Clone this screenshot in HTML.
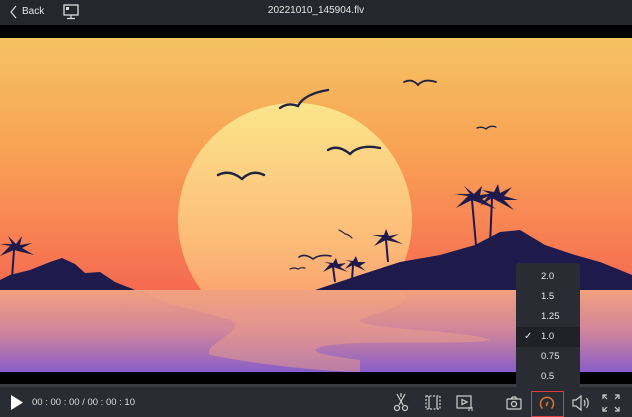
<!DOCTYPE html>
<html><head><meta charset="utf-8"><style>
body{margin:0;width:632px;height:417px;background:#000;overflow:hidden;font-family:"Liberation Sans",sans-serif;position:relative}
.top{position:absolute;left:0;top:0;width:632px;height:25px;background:#25272e;color:#e6e6e6;font-size:10px}
.bot{position:absolute;left:0;top:387px;width:632px;height:30px;background:#2a2c33}
.menu{position:absolute;left:516px;top:263px;width:64px;height:124px;background:#2a2c33;border-radius:3px;color:#e8e8e8;font-size:9.5px}
.menu div{height:20px;line-height:20px;padding-left:25px;position:relative}
.menu .sel{background:#202126}
</style></head><body>
<div class="top">
<svg style="position:absolute;left:9px;top:5px" width="10" height="14"><path d="M7 1 L2 7 L7 13" stroke="#ddd" stroke-width="1.2" fill="none"/></svg>
<span style="position:absolute;left:22px;top:6px">Back</span>
<svg style="position:absolute;left:63px;top:4px" width="17" height="16"><rect x="1" y="1" width="14" height="10" stroke="#ddd" stroke-width="1.3" fill="none"/><rect x="3" y="3" width="3" height="3" fill="#ddd"/><path d="M8 11v3M4 14.5h8" stroke="#ddd" stroke-width="1.2"/></svg>
<span style="position:absolute;left:0;width:632px;text-align:center;top:5px">20221010_145904.flv</span>
</div>
<svg style="position:absolute;left:0;top:38px" width="632" height="334" viewBox="0 38 632 334">
<defs>
<linearGradient id="sky" x1="0" y1="0" x2="0" y2="1"><stop offset="0" stop-color="#f4c261"/><stop offset="0.45" stop-color="#f9a255"/><stop offset="1" stop-color="#f66a52"/></linearGradient>
<linearGradient id="sun" x1="0" y1="0" x2="0" y2="1"><stop offset="0" stop-color="#fbe58b"/><stop offset="0.6" stop-color="#fcbb78"/><stop offset="1" stop-color="#fb9068"/></linearGradient>
<linearGradient id="sea" x1="0" y1="0" x2="0" y2="1"><stop offset="0" stop-color="#f2a07c"/><stop offset="0.5" stop-color="#d0859c"/><stop offset="1" stop-color="#8a5ec8"/></linearGradient>
</defs>
<rect x="0" y="38" width="632" height="252" fill="url(#sky)"/>
<circle cx="295" cy="220" r="117" fill="url(#sun)"/>
<rect x="0" y="290" width="632" height="82" fill="url(#sea)"/>
<path d="M150 290 C140 300 200 310 230 320 C250 330 200 345 210 355 C260 365 330 372 360 372 L360 360 C320 355 300 350 330 345 C380 340 470 345 490 340 C470 330 360 330 360 320 C380 310 420 305 400 290Z" fill="#f5a582" opacity="0.45"/>
<path d="M0 290 L0 280 L10 275 L30 270 L50 262 L62 258 L75 264 L85 273 L100 272 L115 282 L135 290Z" fill="#1f1a4c"/>
<path d="M315 290 L360 275 L400 262 L440 255 L475 245 L500 232 L520 230 L545 245 L575 255 L600 262 L620 270 L632 275 L632 290Z" fill="#1f1a4c"/>
<g stroke="#1f1a4c" stroke-width="2" fill="none">
<path d="M12 278 L14 250 M476 245 L472 200 M490 245 L492 198 M388 262 L386 240 M335 282 L333 267 M352 280 L353 265"/>
</g>
<g fill="#1f1a4c">
<path d="M14 250 l-14 6 l10-10 l-10-2 l12 0 l-4-8 l8 8 l6-8 l-2 9 l12-2 l-10 5 l12 7z"/>
<path d="M472 200 l-16 8 l12-12 l-14-2 l16 0 l-6-8 l10 8 l8-8 l-2 9 l16-2 l-14 6 l14 10z"/>
<path d="M492 198 l-12 8 l10-12 l-8-4 l12 2 l4-8 l2 9 l12-6 l-8 9 l14 4 l-14 0 l10 10z"/>
<path d="M386 240 l-12 6 l8-9 l-10-2 l12 0 l2-6 l3 7 l10-2 l-8 4 l12 6z"/>
<path d="M333 267 l-10 5 l7-8 l-6-2 l9 1 l3-5 l2 6 l8-1 l-6 4 l8 5z"/>
<path d="M353 265 l-8 4 l6-7 l-6-2 l8 1 l3-5 l2 6 l8 0 l-6 4 l6 5z"/>
</g>
<g stroke="#1e2340" stroke-width="2.4" fill="none" stroke-linecap="round">
<path d="M280 108 q8-6 18-2 q6-12 30-16"/>
<path d="M218 175 q12-6 24 4 q10-10 22-4"/>
<path d="M328 150 q10-6 22 4 q10-10 30-6"/>
<path d="M404 82 q8-4 14 3 q6-7 18-3" stroke-width="1.8"/>
<path d="M477 128 q5-2 9 1 q4-4 10-2" stroke-width="1.3"/>
<path d="M299 257 q6-4 14 2 q6-5 18-3" stroke-width="1.6"/>
<path d="M290 269 q4-2 8 0 q3-2 7-1" stroke-width="1.2"/>
<path d="M339 230 q4 2 6 4 q3 0 7 4" stroke-width="1.2"/>
</g>
</svg>
<div style="position:absolute;left:0;top:384px;width:632px;height:3px;background:#3a3c44"></div>
<div class="bot">
<svg style="position:absolute;left:10px;top:7px" width="14" height="17"><path d="M1 1 L13 8.5 L1 16Z" fill="#fff"/></svg>
<span style="position:absolute;left:32px;top:10px;color:#ddd;font-size:9.5px">00 : 00 : 00 / 00 : 00 : 10</span>
<svg style="position:absolute;left:390px;top:6px" width="240" height="20" fill="none" stroke="#cfcfcf" stroke-width="1.2">
<path d="M7 1 L13 12 M15 1 L9 12 M11 0v4"/><circle cx="7" cy="15" r="2.5"/><circle cx="15" cy="15" r="2.5"/>
<rect x="36" y="3" width="14" height="13" stroke-dasharray="2 1.5"/><path d="M39 3v13M47 3v13"/>
<rect x="67" y="3" width="14" height="12"/><path d="M72 6.5 L77 9 L72 11.5Z"/><path d="M79 14v4M82 14v4" stroke-width="1"/>
<rect x="117" y="6" width="14" height="10" rx="1"/><path d="M121 6 l1.5-2 h3 l1.5 2"/><circle cx="124" cy="11" r="2.5"/>
<path d="M152.5 15.5 A6.5 6.5 0 1 1 161.5 15.5" stroke="#e87a2a" stroke-width="1.4"/><path d="M156.3 13 l1.4-4" stroke="#e87a2a" stroke-width="1.6"/>
<path d="M183 7h3l5-4v14l-5-4h-3z"/><path d="M194 7q2 3 0 6M196.5 5q3.5 5 0 10"/>
<path d="M217 2h-4v4M213 2l4 4M225 2h4v4M229 2l-4 4M217 18h-4v-4M213 18l4-4M225 18h4v-4M229 18l-4-4"/>
</svg>
<div style="position:absolute;left:531px;top:4px;width:31px;height:24px;border:1.5px solid #e23a3a"></div>
</div>
<div class="menu">
<div style="margin-top:4px">2.0</div><div>1.5</div><div>1.25</div>
<div class="sel"><span style="position:absolute;left:8px;font-size:10px">✓</span>1.0</div>
<div>0.75</div><div>0.5</div>
</div>
</body></html>
